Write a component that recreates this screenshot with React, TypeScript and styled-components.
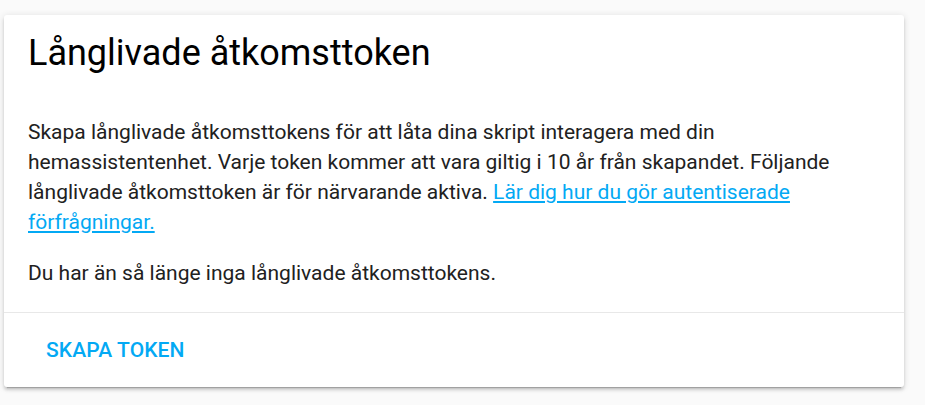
import React from "react";
import styled, { createGlobalStyle } from "styled-components";

const Global = createGlobalStyle`
  html, body {
    margin: 0;
    padding: 0;
    background: #fafafa;
    font-family: Roboto, "Noto Sans", sans-serif;
    -webkit-font-smoothing: antialiased;
  }
`;

const Page = styled.div`
  padding: 15px 0 0 4px;
  min-height: 405px;
  box-sizing: border-box;
`;

const Card = styled.div`
  width: 900px;
  background: #ffffff;
  border-radius: 3px;
  box-shadow: 0 3px 3px 0 rgba(0, 0, 0, 0.14), 0 1px 7px 0 rgba(0, 0, 0, 0.12),
    0 4px 1px -3px rgba(0, 0, 0, 0.2);
  display: flex;
  flex-direction: column;
`;

const Header = styled.h1`
  margin: 0;
  padding: 14px 24px 16px;
  font-size: 36px;
  font-weight: 400;
  line-height: 48px;
  color: #000000;
`;

const Content = styled.div`
  padding: 24px 24px 24px;
  color: #212121;
  font-size: 21px;
  line-height: 30px;
`;

const Paragraph = styled.p`
  margin: 0 0 21px;
  &:last-child {
    margin-bottom: 0;
  }
`;

const Link = styled.a`
  color: #03a9f4;
  text-decoration: underline;
`;

const Actions = styled.div`
  border-top: 1px solid #e8e8e8;
  padding: 12px 18px;
  display: flex;
`;

const TextButton = styled.button`
  border: none;
  background: transparent;
  height: 50px;
  padding: 0 24px;
  font-family: Roboto, "Noto Sans", sans-serif;
  font-size: 21px;
  font-weight: 500;
  letter-spacing: 0.005em;
  text-transform: uppercase;
  color: #03a9f4;
  cursor: pointer;
`;

export default function App() {
  return (
    <>
      <Global />
      <Page>
        <Card>
          <Header>Långlivade åtkomsttoken</Header>
          <Content>
            <Paragraph>
              Skapa långlivade åtkomsttokens för att låta dina skript interagera med din
              hemassistentenhet. Varje token kommer att vara giltig i 10 år från skapandet.
              Följande långlivade åtkomsttoken är för närvarande aktiva.{" "}
              <Link href="#">Lär dig hur du gör autentiserade förfrågningar.</Link>
            </Paragraph>
            <Paragraph>Du har än så länge inga långlivade åtkomsttokens.</Paragraph>
          </Content>
          <Actions>
            <TextButton>Skapa token</TextButton>
          </Actions>
        </Card>
      </Page>
    </>
  );
}
